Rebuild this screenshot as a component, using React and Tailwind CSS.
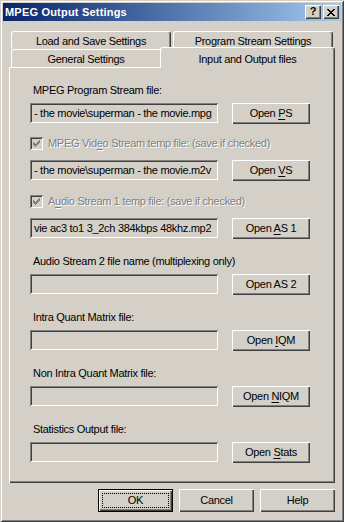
import React from "react";

const FONT = "font-['Liberation_Sans',Arial,sans-serif]";

function Check() {
  const px = [
    [6, 0], [5, 1], [6, 1], [0, 2], [4, 2], [5, 2], [6, 2],
    [0, 3], [1, 3], [3, 3], [4, 3], [5, 3],
    [0, 4], [1, 4], [2, 4], [3, 4], [4, 4],
    [1, 5], [2, 5], [3, 5], [2, 6],
  ];
  return (
    <svg width="7" height="7" viewBox="0 0 7 7" shapeRendering="crispEdges">
      {px.map(([x, y], i) => (
        <rect key={i} x={x} y={y} width="1" height="1" fill="#808080" />
      ))}
    </svg>
  );
}

function CheckRow({ children }) {
  return (
    <div className="flex items-center h-[13px]">
      <div className="w-[13px] h-[13px] shrink-0 bg-[#D4D0C8] shadow-[inset_1px_1px_0_#808080,inset_-1px_-1px_0_#ffffff,inset_2px_2px_0_#404040,inset_-2px_-2px_0_#D4D0C8] flex items-center justify-center">
        <Check />
      </div>
      <span className="ml-[5px] text-[#808080] [text-shadow:1px_1px_0_#ffffff] whitespace-nowrap">
        {children}
      </span>
    </div>
  );
}

function Field({ text }) {
  return (
    <div className="w-[188px] h-[20px] shrink-0 bg-[#D4D0C8] shadow-[inset_1px_1px_0_#808080,inset_-1px_-1px_0_#ffffff,inset_2px_2px_0_#404040,inset_-2px_-2px_0_#D4D0C8] flex items-center overflow-hidden whitespace-nowrap pl-[4px] pr-[2px] text-black">
      <span>{text}</span>
    </div>
  );
}

function Btn({ children, w = "w-[78px]", h = "h-[21px]" }) {
  return (
    <div
      className={`${w} ${h} shrink-0 bg-[#D4D0C8] shadow-[inset_1px_1px_0_#ffffff,inset_-1px_-1px_0_#404040,inset_-2px_-2px_0_#808080] flex items-center justify-center text-black whitespace-nowrap`}
    >
      <span>{children}</span>
    </div>
  );
}

function Row({ text, btn }) {
  return (
    <div className="flex items-start h-[21px]">
      <Field text={text} />
      <div className="ml-[14px]">
        <Btn>{btn}</Btn>
      </div>
    </div>
  );
}

function Label({ children, className = "" }) {
  return (
    <div className={`h-[14px] leading-[14px] pl-[3px] text-black whitespace-nowrap ${className}`}>
      {children}
    </div>
  );
}

function U({ children }) {
  return <span className="underline underline-offset-[2px]">{children}</span>;
}

export default function App() {
  return (
    <div
      className={`${FONT} text-[11px] tracking-[-0.3px] w-[344px] h-[522px] bg-[#D4D0C8] p-[3px] flex flex-col shadow-[inset_1px_1px_0_#D4D0C8,inset_-1px_-1px_0_#404040,inset_2px_2px_0_#ffffff,inset_-2px_-2px_0_#808080]`}
    >
      {/* Title bar */}
      <div className="h-[18px] bg-gradient-to-r from-[#0A246A] to-[#A6CAF0] flex items-center pl-[2px] pr-[2px]">
        <span className="text-white font-bold text-[11px] tracking-[0.2px]">MPEG Output Settings</span>
        <div className="ml-auto flex gap-[2px]">
          <div className="w-[16px] h-[14px] bg-[#D4D0C8] shadow-[inset_1px_1px_0_#ffffff,inset_-1px_-1px_0_#404040,inset_-2px_-2px_0_#808080] flex items-center justify-center">
            <span className="font-bold text-[11px] leading-none text-black -mt-px tracking-normal">?</span>
          </div>
          <div className="w-[16px] h-[14px] bg-[#D4D0C8] shadow-[inset_1px_1px_0_#ffffff,inset_-1px_-1px_0_#404040,inset_-2px_-2px_0_#808080] flex items-center justify-center">
            <svg width="8" height="7" viewBox="0 0 8 7" shapeRendering="crispEdges">
              {[0, 1, 2, 3, 4, 5, 6].map((i) => (
                <g key={i}>
                  <rect x={i} y={i} width="2" height="1" fill="#000" />
                  <rect x={6 - i} y={i} width="2" height="1" fill="#000" />
                </g>
              ))}
            </svg>
          </div>
        </div>
      </div>

      {/* Tab control */}
      <div className="mt-[10px] px-[6px] flex flex-col">
        <div className="flex h-[18px] pl-[2px] gap-[2px]">
          <div className="w-[160px] h-[18px] border-t border-l border-white border-r border-r-[#404040] rounded-t-[3px] shadow-[inset_-1px_0_0_#808080] flex items-center justify-center pt-[1px] text-black">
            Load and Save Settings
          </div>
          <div className="w-[160px] h-[18px] border-t border-l border-white border-r border-r-[#404040] rounded-t-[3px] shadow-[inset_-1px_0_0_#808080] flex items-center justify-center pt-[1px] text-black">
            Program Stream Settings
          </div>
        </div>
        <div className="flex h-[18px] items-start">
          <div className="ml-[2px] w-[149px] h-[18px] border-t border-l border-white rounded-tl-[3px] flex items-center justify-center pt-[1px] text-black">
            General Settings
          </div>
          <div className="relative z-10 -mt-[2px] w-[175px] h-[21px] bg-[#D4D0C8] border-t border-l border-white border-r border-r-[#404040] rounded-t-[3px] shadow-[inset_-1px_0_0_#808080] flex items-start justify-center pt-[3px] text-black">
            Input and Output files
          </div>
        </div>

        {/* Panel */}
        <div className="h-[416px] bg-[#D4D0C8] shadow-[inset_1px_1px_0_#ffffff,inset_-1px_-1px_0_#404040,inset_-2px_-2px_0_#808080] pt-[16px] pl-[21px] flex flex-col">
          <Label>MPEG Program Stream file:</Label>
          <div className="mt-[6px]">
            <Row text="- the movie\superman - the movie.mpg" btn={<>Open <U>P</U>S</>} />
          </div>
          <div className="mt-[13px]">
            <CheckRow>
              MPEG Vid<U>e</U>o Stream temp file: (save if checked)
            </CheckRow>
          </div>
          <div className="mt-[10px]">
            <Row text="- the movie\superman - the movie.m2v" btn={<>Open <U>V</U>S</>} />
          </div>
          <div className="mt-[14px]">
            <CheckRow>
              A<U>u</U>dio Stream 1 temp file: (save if checked)
            </CheckRow>
          </div>
          <div className="mt-[10px]">
            <Row text="vie ac3 to1 3_2ch 384kbps 48khz.mp2" btn={<>Open <U>A</U>S 1</>} />
          </div>
          <Label className="mt-[15px]">Audio Stream 2 file name (multiplexing only)</Label>
          <div className="mt-[6px]">
            <Row text="" btn={<>Open AS 2</>} />
          </div>
          <Label className="mt-[15px]">Intra Quant Matrix file:</Label>
          <div className="mt-[6px]">
            <Row text="" btn={<>Open <U>I</U>QM</>} />
          </div>
          <Label className="mt-[15px]">Non Intra Quant Matrix file:</Label>
          <div className="mt-[6px]">
            <Row text="" btn={<>Open <U>N</U>IQM</>} />
          </div>
          <Label className="mt-[15px]">Statistics Output file:</Label>
          <div className="mt-[6px]">
            <Row text="" btn={<>Open <U>S</U>tats</>} />
          </div>
        </div>

        {/* Bottom buttons */}
        <div className="mt-[6px] flex justify-end gap-[6px]">
          <div className="w-[75px] h-[23px] border border-black">
            <div className="w-full h-full bg-[#D4D0C8] shadow-[inset_1px_1px_0_#ffffff,inset_-1px_-1px_0_#404040,inset_-2px_-2px_0_#808080] p-[3px]">
              <div className="w-full h-full border border-dotted border-black flex items-center justify-center text-black">
                OK
              </div>
            </div>
          </div>
          <Btn w="w-[75px]" h="h-[23px]">Cancel</Btn>
          <Btn w="w-[75px]" h="h-[23px]">Help</Btn>
        </div>
      </div>
    </div>
  );
}
